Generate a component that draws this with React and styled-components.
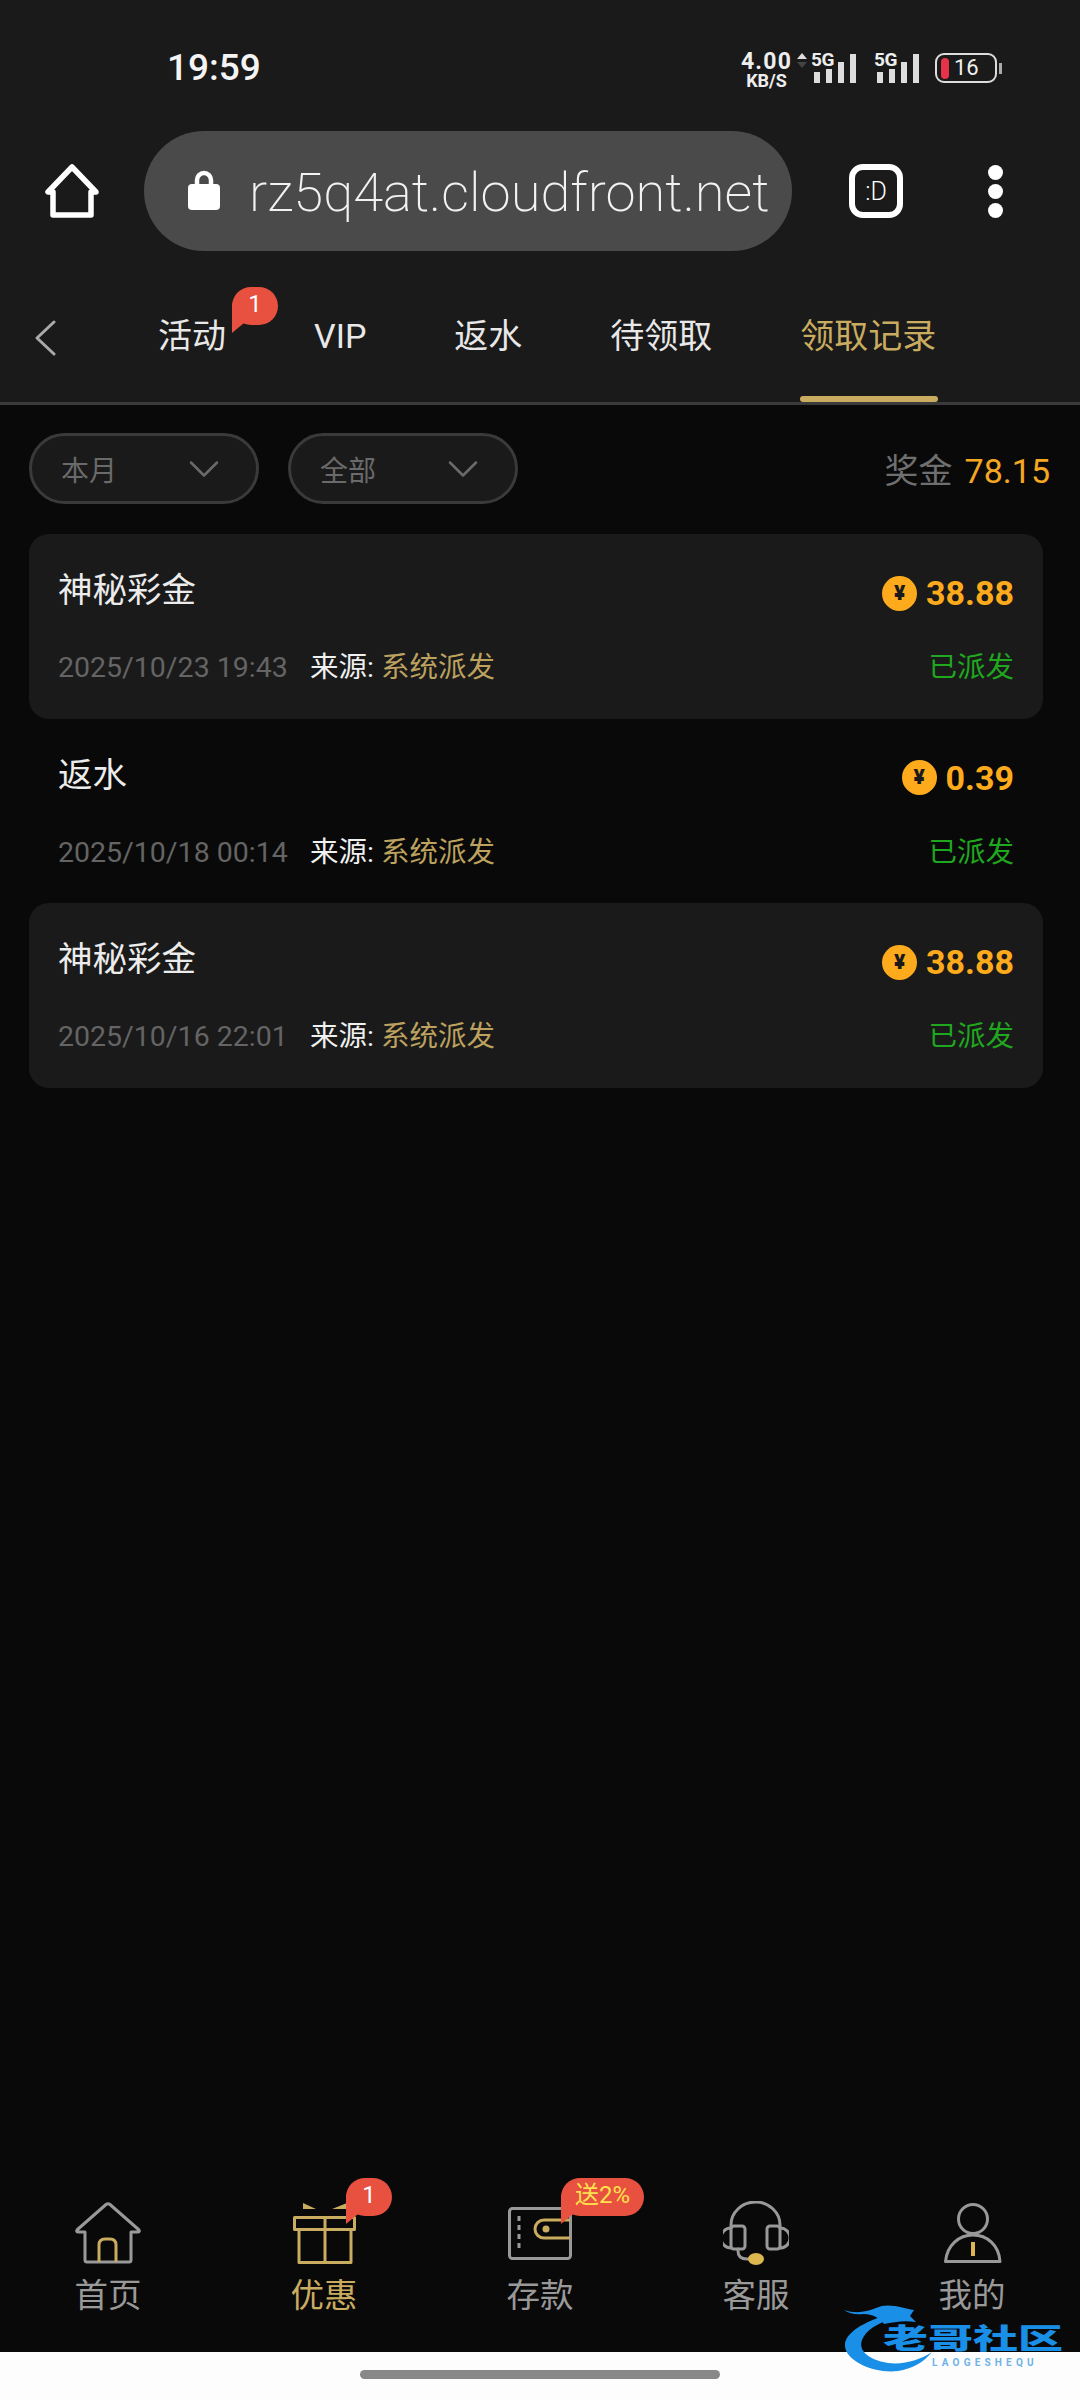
import React from 'react'
import styled, { createGlobalStyle } from 'styled-components'

const Global = createGlobalStyle`
  html, body, #root { margin: 0; padding: 0; }
  body { background: #090909; font-family: Roboto, "Noto Sans CJK SC", sans-serif; }
  * { box-sizing: border-box; }
`

const Page = styled.div`
  position: relative;
  width: 1080px;
  height: 2400px;
  display: flex;
  flex-direction: column;
  background: #090909;
  overflow: hidden;
`

const Header = styled.header`
  background: #1a1a1a;
`

const StatusBar = styled.div`
  height: 131px;
  display: flex;
  align-items: flex-start;
  padding: 53px 78px 0 167px;
  color: #fff;
`

const Clock = styled.div`
  font-size: 37px;
  line-height: 30px;
  font-weight: 500;
  color: #f4f4f4;
`

const Speed = styled.div`
  margin-left: auto;
  width: 51px;
  display: flex;
  flex-direction: column;
  align-items: center;
  font-weight: 700;
  color: #eee;
`

const SpeedValue = styled.span`
  font-size: 23px;
  line-height: 17px;
  letter-spacing: 1.2px;
  white-space: nowrap;
`

const SpeedUnit = styled.span`
  font-size: 18px;
  line-height: 17px;
  margin-top: 2px;
  white-space: nowrap;
`

const Arrows = styled.svg`
  width: 10px;
  height: 15px;
  margin: 0 7px 0 5px;
`

const Signal = styled.div`
  position: relative;
  height: 30px;
  display: flex;
  align-items: flex-end;
  gap: 6px;
  margin-right: ${p => p.$gap}px;
`

const SignalBar = styled.i`
  display: block;
  width: 6px;
  height: ${p => p.$h}px;
  background: #ddd;
`

const SignalLabel = styled.span`
  position: absolute;
  top: -2px;
  left: -3px;
  font-size: 19px;
  line-height: 17px;
  font-weight: 700;
  letter-spacing: -0.5px;
  color: #eee;
`

const Battery = styled.div`
  width: 62px;
  height: 30px;
  border: 2.5px solid #ddd;
  border-radius: 9px;
  display: flex;
  align-items: center;
  padding-left: 4px;
`

const BatteryFill = styled.i`
  display: block;
  width: 8px;
  height: 21px;
  border-radius: 4px;
  background: #e8324a;
`

const BatteryText = styled.span`
  margin-left: 5px;
  font-size: 22px;
  line-height: 24px;
  color: #eee;
`

const BatteryNub = styled.i`
  display: block;
  width: 3px;
  height: 11px;
  margin: 10px 0 0 2px;
  background: #aaa;
`

const Toolbar = styled.div`
  height: 120px;
  display: flex;
  align-items: center;
  padding-left: 45px;
`

const HomeButton = styled.svg`
  width: 54px;
  height: 54px;
  margin-right: 45px;
`

const UrlPill = styled.div`
  width: 648px;
  height: 120px;
  border-radius: 60px;
  background: #4a4a4a;
  display: flex;
  align-items: center;
  padding-left: 44px;
  overflow: hidden;
`

const LockIcon = styled.svg`
  width: 32px;
  height: 41px;
  flex: none;
  margin: -4px 29px 0 0;
`

const UrlText = styled.span`
  margin-top: 4px;
  font-size: 54.3px;
  line-height: 60px;
  font-weight: 200;
  color: #f2f2f2;
  white-space: nowrap;
`

const TabCount = styled.div`
  width: 54px;
  height: 54px;
  margin-left: 57px;
  border: 6px solid #fff;
  border-radius: 14px;
  display: flex;
  align-items: center;
  justify-content: center;
  font-size: 25px;
  font-weight: 300;
  color: #fff;
`

const MenuDots = styled.div`
  margin-left: 85px;
  display: flex;
  flex-direction: column;
  gap: 4px;
`

const Dot = styled.i`
  display: block;
  width: 15px;
  height: 15px;
  border-radius: 50%;
  background: #fff;
`

const TabBar = styled.nav`
  height: 154px;
  display: flex;
  align-items: stretch;
  gap: 88px;
  padding-left: 34px;
  border-bottom: 3px solid #3a3a3a;
`

const BackIcon = styled.svg`
  width: 22px;
  height: 36px;
  margin: 69px 14px 0 0;
  flex: none;
`

const Tab = styled.div`
  position: relative;
  padding-top: 61px;
  font-size: 34px;
  line-height: 48px;
  white-space: nowrap;
  color: ${p => (p.$active ? '#c9ac60' : '#e8e8e8')};
`

const TabLine = styled.i`
  position: absolute;
  left: 0;
  right: -2px;
  bottom: 0;
  height: 6px;
  border-radius: 3px;
  background: #c9ac60;
`

const Bubble = styled.span`
  position: absolute;
  left: ${p => p.$left}px;
  top: ${p => p.$top}px;
  min-width: 46px;
  height: 38px;
  padding: 0 ${p => (p.$wide ? 14 : 0)}px;
  border-radius: 19px;
  background: #e8503f;
  color: ${p => (p.$wide ? '#ffe14d' : '#fff')};
  font-size: 24px;
  line-height: 34px;
  text-align: center;
  white-space: nowrap;
  z-index: 2;

  &::after {
    content: '';
    position: absolute;
    left: 0;
    top: 16px;
    width: 18px;
    height: 30px;
    background: #e8503f;
    clip-path: polygon(0 0, 100% 50%, 0 100%);
  }
`

const FilterRow = styled.div`
  display: flex;
  align-items: center;
  gap: 29px;
  padding: 28px 30px 30px 29px;
`

const Filter = styled.div`
  width: 230px;
  height: 71px;
  border: 3px solid #3a3a3a;
  border-radius: 36px;
  background: #1a1a1a;
  display: flex;
  align-items: center;
  justify-content: space-between;
  padding: 0 37px 0 29px;
  font-size: 28px;
  color: #6a6a6a;
`

const Chevron = styled.svg`
  width: 30px;
  height: 16px;
`

const Bonus = styled.div`
  margin-left: auto;
  font-size: 34px;
  color: #6f6f6f;
  white-space: nowrap;
`

const BonusValue = styled.span`
  margin-left: 12px;
  color: #f5a623;
`

const List = styled.div`
  margin: 0 37px 0 29px;
`

const Row = styled.div`
  height: 184.5px;
  padding: 32px 29px 0;
  border-radius: 20px;
  background: ${p => (p.$striped ? '#1a1a1a' : 'transparent')};
`

const RowLine = styled.div`
  display: flex;
  align-items: flex-start;
  justify-content: space-between;
`

const Title = styled.div`
  font-size: 34.5px;
  line-height: 48px;
  color: #ececec;
`

const Amount = styled.div`
  display: flex;
  align-items: center;
  gap: 9px;
  margin-top: 3px;
  font-size: 34px;
  line-height: 48px;
  font-weight: 700;
  color: #fdab1c;
`

const Coin = styled.i`
  width: 35px;
  height: 35px;
  border-radius: 50%;
  background: #fdab1c;
  color: #1a1a1a;
  font-style: normal;
  font-size: 21px;
  font-weight: 900;
  line-height: 35px;
  text-align: center;
`

const Meta = styled(RowLine)`
  margin-top: 29px;
  font-size: 28.5px;
  line-height: 44px;
`

const MetaLeft = styled.div`
  display: flex;
  gap: 8px;
`

const Time = styled.span`
  width: 244px;
  color: #646464;
  white-space: nowrap;
`

const Source = styled.span`
  color: #f0f0f0;
`

const SourceValue = styled.span`
  color: #bda15f;
`

const Status = styled.span`
  color: #1fa71f;
`

const BottomNav = styled.nav`
  margin-top: auto;
  height: 180px;
  display: grid;
  grid-template-columns: repeat(5, 216px);
  padding-top: 26px;
`

const NavItem = styled.div`
  position: relative;
  display: flex;
  flex-direction: column;
  align-items: center;
  color: ${p => (p.$active ? '#c9ac60' : '#999')};
`

const NavIcon = styled.div`
  height: 70px;
  display: flex;
  align-items: center;
  justify-content: center;
`

const NavLabel = styled.span`
  margin-top: 6px;
  font-size: 33.5px;
  line-height: 44px;
`

const GestureArea = styled.div`
  height: 48px;
  background: #fdfdfd;
  display: flex;
  justify-content: center;
  padding-top: 18px;
`

const GesturePill = styled.i`
  display: block;
  width: 360px;
  height: 9px;
  border-radius: 5px;
  background: #888;
`

const Watermark = styled.div`
  position: absolute;
  left: 842px;
  top: 2300px;
  width: 221px;
  height: 72px;
`

const WatermarkName = styled.span`
  position: absolute;
  left: 41px;
  top: 15px;
  font-size: 45px;
  line-height: 50px;
  font-weight: 900;
  color: #1a8fe8;
  white-space: nowrap;
  transform: scaleY(0.62);
`

const WatermarkSub = styled.span`
  position: absolute;
  left: 90px;
  top: 57px;
  font-size: 10px;
  line-height: 12px;
  font-weight: 700;
  letter-spacing: 4.2px;
  color: #6db3ea;
  white-space: nowrap;
`

const DragonSvg = styled.svg`
  position: absolute;
  left: 0;
  top: 0;
`

const GOLD = '#c9ac60'
const GRAY = '#999'

const tabs = ['VIP', '返水', '待领取']

const records = [
  { title: '神秘彩金', amount: '38.88', time: '2025/10/23 19:43', striped: true },
  { title: '返水', amount: '0.39', time: '2025/10/18 00:14', striped: false },
  { title: '神秘彩金', amount: '38.88', time: '2025/10/16 22:01', striped: true },
]

const SignalBars = ({ gap }) => (
  <Signal $gap={gap}>
    <SignalBar $h={11} />
    <SignalBar $h={14} />
    <SignalBar $h={21} />
    <SignalBar $h={29} />
    <SignalLabel>5G</SignalLabel>
  </Signal>
)

const DownChevron = () => (
  <Chevron viewBox="0 0 30 16" fill="none" stroke="#6a6a6a" strokeWidth="2.5" strokeLinecap="round" strokeLinejoin="round">
    <path d="M2 1.5 L15 14.5 L28 1.5" />
  </Chevron>
)

const HomeNavIcon = () => (
  <svg width="68" height="62" viewBox="0 0 68 62" fill="none" strokeWidth="3" strokeLinejoin="round">
    <path stroke={GRAY} d="M11 30 H4.5 Q1.5 30 3.5 27.5 L32 2.5 Q34 1 36 2.5 L64.5 27.5 Q66.5 30 63.5 30 H57 V58 Q57 60 55 60 H13 Q11 60 11 58 Z" />
    <path stroke={GOLD} d="M25 60 V43 Q25 37 31 37 H36 Q42 37 42 43 V60" />
  </svg>
)

const GiftIcon = () => (
  <svg width="63" height="62" viewBox="0 0 63 62" fill="none" stroke={GOLD} strokeWidth="3" strokeLinejoin="round">
    <path fill={GOLD} stroke="none" d="M10 1 L23 7 H10 Z M39 7 L54 1 V7 Z" />
    <rect x="1.5" y="15.5" width="60" height="12" />
    <path d="M6 27 V60.5 H58 V27 M32 15 V60" />
  </svg>
)

const WalletIcon = () => (
  <svg width="64" height="53" viewBox="0 0 64 53" fill="none" strokeWidth="3">
    <rect x="1.5" y="1.5" width="61" height="50" rx="3" stroke={GRAY} />
    <path d="M11 9 V42" stroke={GRAY} strokeDasharray="5 4" />
    <path d="M62 13 H36 A9 9 0 0 0 36 31 H62" stroke={GOLD} />
    <circle cx="38" cy="22" r="3.5" fill={GOLD} />
  </svg>
)

const HeadsetIcon = () => (
  <svg width="66" height="65" viewBox="0 0 66 65" fill="none" stroke={GRAY} strokeWidth="3" strokeLinecap="round">
    <path d="M8 26 V24 A24.5 23 0 0 1 57 24 V26" />
    <rect x="8" y="25" width="14" height="23" rx="3" />
    <rect x="44" y="25" width="13" height="23" rx="3" />
    <path d="M8 27 A10 10 0 0 0 8 47 M57 27 A10 10 0 0 1 57 47" />
    <path d="M15 48 V50 Q15 58 24 58 H27" />
    <ellipse cx="33" cy="58" rx="8" ry="6" fill="#dcb64e" stroke="none" />
  </svg>
)

const UserIcon = () => (
  <svg width="59" height="60" viewBox="0 0 59 60" fill="none" stroke={GRAY} strokeWidth="3" strokeLinejoin="round">
    <circle cx="30" cy="16" r="14.5" />
    <path d="M2.5 58.5 C4 42 16 32 30 32 C44 32 56 42 57 58.5 Z" />
    <path d="M30 39 V53" stroke="#dcb64e" strokeWidth="4" />
  </svg>
)

const App = () => (
  <Page>
    <Global />
    <Header>
      <StatusBar>
        <Clock>19:59</Clock>
        <Speed>
          <SpeedValue>4.00</SpeedValue>
          <SpeedUnit>KB/S</SpeedUnit>
        </Speed>
        <Arrows viewBox="0 0 10 15">
          <path d="M5 0 L10 6 H0 Z" fill="#ddd" />
          <path d="M5 15 L10 9 H0 Z" fill="#444" />
        </Arrows>
        <SignalBars gap={21} />
        <SignalBars gap={16} />
        <Battery>
          <BatteryFill />
          <BatteryText>16</BatteryText>
        </Battery>
        <BatteryNub />
      </StatusBar>

      <Toolbar>
        <HomeButton viewBox="0 0 54 54" fill="none" stroke="#fff" strokeWidth="5.5" strokeLinejoin="round">
          <path d="M27 3 L3 28 H8 V51 H46 V28 H51 Z" />
        </HomeButton>
        <UrlPill>
          <LockIcon viewBox="0 0 32 41">
            <path d="M9 18 V11 A7 7 0 0 1 23 11 V18" fill="none" stroke="#fff" strokeWidth="4.5" />
            <rect y="15" width="32" height="26" rx="4" fill="#fff" />
          </LockIcon>
          <UrlText>rz5q4at.cloudfront.net</UrlText>
        </UrlPill>
        <TabCount>:D</TabCount>
        <MenuDots>
          <Dot />
          <Dot />
          <Dot />
        </MenuDots>
      </Toolbar>

      <TabBar>
        <BackIcon viewBox="0 0 22 36" fill="none" stroke="#aaa" strokeWidth="3" strokeLinecap="round" strokeLinejoin="round">
          <path d="M20 2 L3 18 L20 34" />
        </BackIcon>
        <Tab>
          活动
          <Bubble $left={74} $top={36}>1</Bubble>
        </Tab>
        {tabs.map(t => (
          <Tab key={t}>{t}</Tab>
        ))}
        <Tab $active>
          领取记录
          <TabLine />
        </Tab>
      </TabBar>
    </Header>

    <FilterRow>
      <Filter>
        本月
        <DownChevron />
      </Filter>
      <Filter>
        全部
        <DownChevron />
      </Filter>
      <Bonus>
        奖金<BonusValue>78.15</BonusValue>
      </Bonus>
    </FilterRow>

    <List>
      {records.map(r => (
        <Row key={r.time} $striped={r.striped}>
          <RowLine>
            <Title>{r.title}</Title>
            <Amount>
              <Coin>¥</Coin>
              {r.amount}
            </Amount>
          </RowLine>
          <Meta>
            <MetaLeft>
              <Time>{r.time}</Time>
              <span>
                <Source>来源: </Source>
                <SourceValue>系统派发</SourceValue>
              </span>
            </MetaLeft>
            <Status>已派发</Status>
          </Meta>
        </Row>
      ))}
    </List>

    <BottomNav>
      <NavItem>
        <NavIcon><HomeNavIcon /></NavIcon>
        <NavLabel>首页</NavLabel>
      </NavItem>
      <NavItem $active>
        <NavIcon><GiftIcon /></NavIcon>
        <NavLabel>优惠</NavLabel>
        <Bubble $left={130} $top={-20}>1</Bubble>
      </NavItem>
      <NavItem>
        <NavIcon><WalletIcon /></NavIcon>
        <NavLabel>存款</NavLabel>
        <Bubble $left={129} $top={-20} $wide>送2%</Bubble>
      </NavItem>
      <NavItem>
        <NavIcon><HeadsetIcon /></NavIcon>
        <NavLabel>客服</NavLabel>
      </NavItem>
      <NavItem>
        <NavIcon><UserIcon /></NavIcon>
        <NavLabel>我的</NavLabel>
      </NavItem>
    </BottomNav>

    <GestureArea>
      <GesturePill />
    </GestureArea>

    <Watermark>
      <DragonSvg width="100" height="72" viewBox="0 0 100 72" fill="#1a8fe8">
        <path d="M48 14 C20 22 2 34 3 46 C4 62 34 74 56 71 C70 69 82 62 90 52 C78 60 62 65 46 63 C26 60 16 50 20 40 C24 30 34 24 52 18 Z" />
        <path d="M2 10 C14 14 24 12 34 8 C46 2 60 8 72 10 L68 16 L74 22 C62 20 52 22 42 24 C38 18 30 14 22 14 C14 15 8 14 2 10 Z" />
      </DragonSvg>
      <WatermarkName>老哥社区</WatermarkName>
      <WatermarkSub>LAOGESHEQU</WatermarkSub>
    </Watermark>
  </Page>
)

export default App
